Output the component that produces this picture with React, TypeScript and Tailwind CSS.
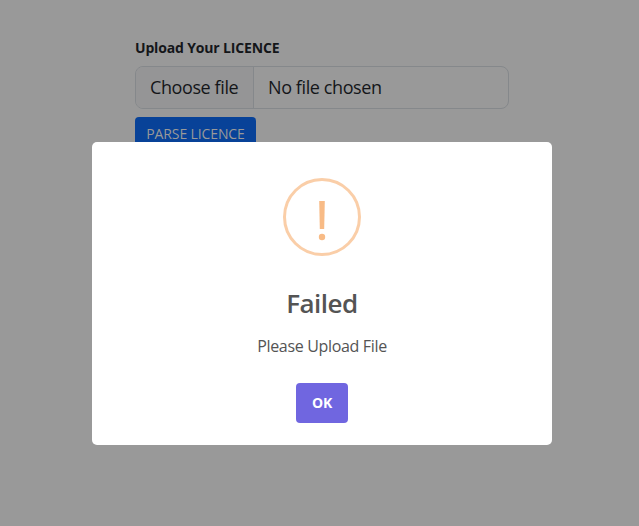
import React from "react";

export default function App() {
  return (
    <div className="relative h-[526px] w-[639px] overflow-hidden bg-[#999999] font-['Open_Sans','Noto_Sans',sans-serif]">
      <main className="flex flex-col items-start pl-[135px] pt-[37px]">
        <label className="h-[21px] text-[14px] leading-[21px] font-bold tracking-[-0.16px] text-[#141619]">Upload Your LICENCE</label>
        <div className="mt-2 flex h-[43px] w-[374px] overflow-hidden rounded-lg border border-[#85888b] text-[18px] leading-[41px] tracking-[-0.4px] text-[#141619]">
          <div className="w-[118px] border-r border-[#85888b] bg-[#959596] pl-[14px]">Choose file</div>
          <div className="pl-[14px]">No file chosen</div>
        </div>
        <button className="mt-2 h-[34px] w-[121px] rounded bg-[#084298] pb-0.5 text-[14px] tracking-[-0.12px] text-[#999]">PARSE LICENCE</button>
      </main>
      <section className="absolute left-[92px] top-[142px] flex h-[303px] w-[460px] flex-col items-center rounded-[5px] bg-white pt-9">
        <div className="flex h-[78px] w-[78px] items-center justify-center rounded-full border-[3px] border-[#facea8] text-[#f8bb86]">
          <svg width="20" height="50" viewBox="0 0 20 50" fill="currentColor"><path d="M7.2 9h5.6l-.6 28H7.8z" /><circle cx="10" cy="45" r="3.2" /></svg>
        </div>
        <h2 className="mt-[29px] text-[26px] leading-[36px] font-semibold tracking-[-0.5px] text-[#545454]">Failed</h2>
        <p className="mt-[13px] text-[16px] leading-6 tracking-[-0.33px] text-[#545454]">Please Upload File</p>
        <button className="mt-[25px] h-10 w-[52px] rounded bg-[#7066e0] pb-0.5 text-[14px] font-bold tracking-[-0.3px] text-white">OK</button>
      </section>
    </div>
  );
}
